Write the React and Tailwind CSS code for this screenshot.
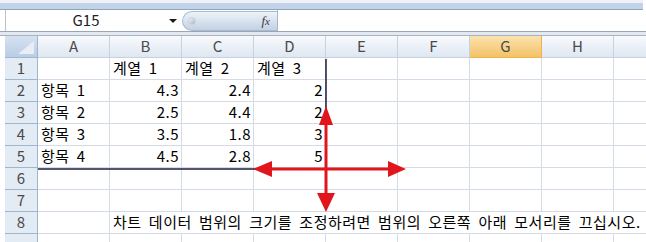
import React from 'react';

const cols = ['A', 'B', 'C', 'D', 'E', 'F', 'G', 'H', ''];

// cell values per row (A..D), rest empty
const rows = [
  ['', '계열 1', '계열 2', '계열 3'],
  ['항목 1', '4.3', '2.4', '2'],
  ['항목 2', '2.5', '4.4', '2'],
  ['항목 3', '3.5', '1.8', '3'],
  ['항목 4', '4.5', '2.8', '5'],
  [],
  [],
  [],
  [],
];

const isNum = (v) => /^[0-9.]+$/.test(v);

function HeaderRow() {
  return (
    <div className="flex h-[22px] pl-[5px]">
      <div className="relative w-[33px] shrink-0 h-full bg-gradient-to-b from-[#d6e2f1] to-[#b9cde6] border-r border-b border-[#9eb6ce]">
        <svg className="absolute inset-0" width="33" height="22">
          <polygon points="13,18 29,18 29,5" fill="#e9eef5" />
        </svg>
      </div>
      {cols.map((c, i) => (
        <div
          key={i}
          className={
            c === 'G'
              ? 'w-[72px] shrink-0 h-full flex items-center justify-center border-r border-b border-[#f0b246] bg-gradient-to-b from-[#fbe2ae] to-[#f3c265] text-[15px] text-[#4a4a4a]'
              : 'w-[72px] shrink-0 h-full flex items-center justify-center border-r border-b border-[#c5d2e3] bg-gradient-to-b from-[#f8fafd] to-[#dfe7f1] text-[15px] text-[#4a4a4a]'
          }
        >
          {c}
        </div>
      ))}
    </div>
  );
}

function DataRow({ index, values }) {
  const note = index === 7;
  return (
    <div className="flex h-[22px] pl-[5px]">
      <div className="w-[33px] shrink-0 h-full flex items-center justify-center bg-[#e3ebf5] border-r border-b border-[#9eb6ce] text-[15px] text-[#4a4a4a]">
        {index < 8 ? index + 1 : ''}
      </div>
      {cols.map((c, i) => {
        const v = values[i] || '';
        const noLine = note && i >= 1;
        return (
          <div
            key={i}
            className={`w-[72px] shrink-0 h-full flex items-center border-b border-[#d4dbe6] text-[15px] text-black whitespace-nowrap tracking-[0.5px] [word-spacing:3.4px] ${
              noLine ? '' : 'border-r'
            } ${isNum(v) ? 'justify-end pr-[2px]' : 'justify-start pl-[3px]'}`}
          >
            {note && i === 1 ? (
              <span className="relative z-10">
                차트 데이터 범위의 크기를 조정하려면 범위의 오른쪽 아래 모서리를 끄십시오.
              </span>
            ) : (
              v
            )}
          </div>
        );
      })}
    </div>
  );
}

export default function App() {
  return (
    <div className="relative w-[646px] h-[242px] overflow-hidden bg-white font-['Noto_Sans_CJK_KR','Noto_Sans',sans-serif]">
      {/* ribbon edge */}
      <div className="w-[643px] h-[10px] flex flex-col">
        <div className="h-[3px] bg-[#eef2f7]" />
        <div className="h-[6px] bg-[#c2d3e8]" />
        <div className="h-[1px] bg-[#8ea5c2]" />
      </div>

      {/* formula bar */}
      <div className="flex h-[22px] pl-[5px] border-b border-[#9aa6b4]">
        <div className="relative w-[177px] h-full border-l border-[#b7c3d1] flex items-center">
          <span className="w-[160px] text-center text-[15px] text-[#222]">G15</span>
          <svg className="absolute left-[163px] top-[9px]" width="8" height="5">
            <polygon points="0,0 8,0 4,4" fill="#1a1a1a" />
          </svg>
        </div>
        <div className="relative w-[95px] h-[20px] mt-[1px] rounded-l-full border border-r-0 border-[#a9bbd2] bg-gradient-to-b from-[#eef3f9] to-[#c3d1e4] flex items-center">
          <span className="ml-[5px] w-[8px] h-[8px] rounded-full bg-gradient-to-br from-[#f4f6f9] to-[#aab4c0] border border-[#c8d0da]" />
          <span className="ml-auto mr-[7px] font-['Liberation_Serif',serif] italic text-[13px] text-[#3a3a3a]">
            f<span className="text-[11px]">x</span>
          </span>
        </div>
        <div className="flex-1 h-full border-l border-[#a9b6c6] bg-white" />
      </div>

      {/* separator */}
      <div className="h-[4px] bg-[#e4e9ef] border-b border-[#a4b3c6]" />

      {/* grid */}
      <HeaderRow />
      {rows.map((r, i) => (
        <DataRow key={i} index={i} values={r} />
      ))}

      {/* range outline and resize arrows */}
      <svg className="absolute left-0 top-0 pointer-events-none" width="646" height="242">
        <line x1="326" y1="59" x2="326" y2="169" stroke="#1c1c3c" strokeWidth="1.5" />
        <line x1="38" y1="169" x2="326" y2="169" stroke="#1c1c3c" strokeWidth="1.5" />
        <rect x="324.5" y="122" width="3" height="74" fill="#e0161c" />
        <rect x="268" y="167.5" width="124" height="3" fill="#e0161c" />
        <polygon points="326,106 319,125 333,125" fill="#e0161c" />
        <polygon points="317,193 335,193 326,212" fill="#e0161c" />
        <polygon points="253,169 272,161 272,177" fill="#e0161c" />
        <polygon points="406,169 388,161 388,177" fill="#e0161c" />
      </svg>
    </div>
  );
}
